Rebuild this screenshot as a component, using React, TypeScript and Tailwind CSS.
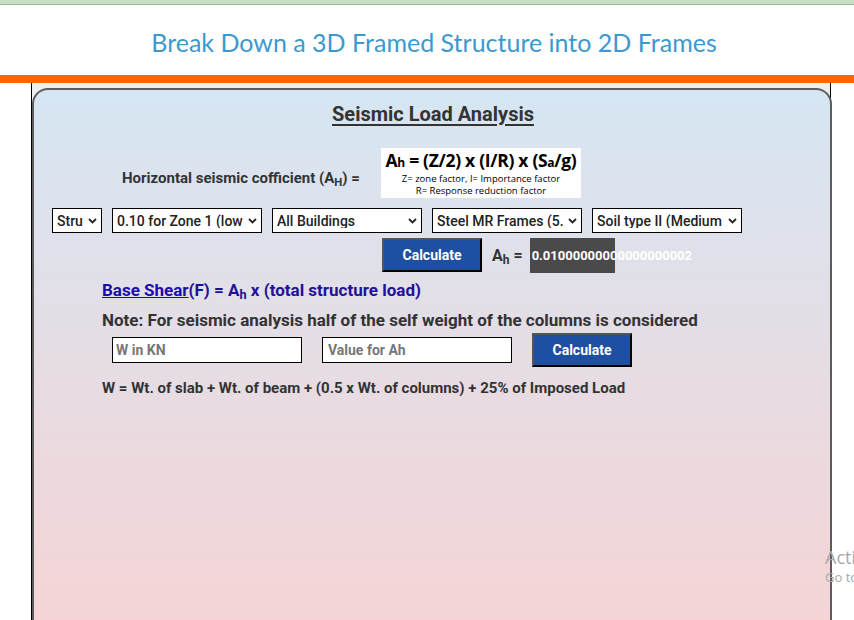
import React from 'react';

const selects = [
  { label: 'Stru', w: 'w-[50px]' },
  { label: '0.10 for Zone 1 (low', w: 'w-[150px]' },
  { label: 'All Buildings', w: 'w-[150px]' },
  { label: 'Steel MR Frames (5.', w: 'w-[150px]' },
  { label: 'Soil type II (Medium', w: 'w-[150px]' },
];

function Chevron() {
  return (
    <svg width="9" height="6" viewBox="0 0 9 6" className="shrink-0">
      <polyline points="1,1 4.5,4.5 8,1" fill="none" stroke="#222" strokeWidth="1.8" />
    </svg>
  );
}

function Select({ label, w }: { label: string; w: string }) {
  return (
    <div className={`${w} h-[25px] border border-black bg-white flex items-center pl-[4px] pr-[4px] gap-[2px]`}>
      <span className="flex-1 overflow-hidden whitespace-nowrap text-[14px] font-medium text-[#222] leading-none">{label}</span>
      <Chevron />
    </div>
  );
}

function CalcButton() {
  return (
    <button className="w-[100px] h-[34px] bg-[#1f4fa0] border-2 border-t-[#555] border-l-[#555] border-r-black border-b-black text-white text-[14px] font-bold">
      Calculate
    </button>
  );
}

export default function App() {
  return (
    <div className="w-[854px] h-[620px] overflow-hidden bg-white relative font-['Roboto',sans-serif]">
      {/* top strip */}
      <div className="h-[5px] bg-[#c6e0c6] border-b border-[#9cb89c]" />

      {/* header */}
      <div className="h-[70px] flex items-center justify-center pl-[14px] pt-[6px]">
        <h1 className="font-['Lato',sans-serif] text-[25px] text-[#3b99d0]">
          Break Down a 3D Framed Structure into 2D Frames
        </h1>
      </div>
      <div className="h-[8px] bg-[#ff6600]" />

      {/* page body */}
      <div className="ml-[31px] w-[800px] h-[537px] border-l border-r border-black bg-[#efefef] pt-[5px]">
        <div className="w-[800px] h-[560px] rounded-t-[16px] border-2 border-b-0 border-[#5c5c5c] bg-gradient-to-b from-[#d5e6f3] to-[#f6d3d4] text-[#333]">
          <h2 className="mt-[12px] text-center text-[20px] leading-[24px] font-bold underline underline-offset-[3px] decoration-[1.5px] pl-[2px]">
            Seismic Load Analysis
          </h2>

          {/* coefficient + formula */}
          <div className="mt-[22px] ml-[88px] flex items-center">
            <div className="w-[259px] mt-[10px] text-[15px] font-bold text-[#333] whitespace-nowrap">
              Horizontal seismic cofficient (A<sub>H</sub>) =
            </div>
            <div className="w-[200px] h-[50px] bg-white flex flex-col items-center font-['Open_Sans',sans-serif] text-black">
              <div className="text-[17.5px] font-bold leading-[20px] mt-[2px] tracking-[-0.3px] whitespace-nowrap">
                A<span className="text-[12px]">h</span> = (Z/2) x (I/R) x (S<span className="text-[12px]">a</span>/g)
              </div>
              <div className="text-[9.5px] leading-[12px] whitespace-nowrap">Z= zone factor, I= Importance factor</div>
              <div className="text-[9.5px] leading-[12px] whitespace-nowrap">R= Response reduction factor</div>
            </div>
          </div>

          {/* selects */}
          <div className="mt-[10px] ml-[18px] flex gap-[10px]">
            {selects.map((s) => (
              <Select key={s.label} label={s.label} w={s.w} />
            ))}
          </div>

          {/* calculate Ah */}
          <div className="mt-[5px] ml-[348px] flex items-start">
            <CalcButton />
            <div className="ml-[10px] mt-[6px] text-[16px] font-bold text-[#333]">
              A<sub>h</sub> =
            </div>
            <div className="ml-[7px] w-[85px] h-[35px] bg-[#4a4a4a] flex items-center">
              <span className="pl-[2px] text-[13px] font-bold text-white whitespace-nowrap">0.01000000000000000002</span>
            </div>
          </div>

          {/* base shear */}
          <div className="mt-[7px] ml-[68px] text-[17px] leading-[20px] font-bold text-[#23109a]">
            <span className="underline text-[#1a0dab]">Base Shear</span>(F) = A<sub>h</sub> x (total structure load)
          </div>
          <div className="mt-[10px] ml-[68px] text-[17px] leading-[20px] font-bold text-[#333]">
            Note: For seismic analysis half of the self weight of the columns is considered
          </div>

          {/* inputs */}
          <div className="mt-[3px] ml-[78px] flex items-center gap-[20px]">
            <input
              placeholder="W in KN"
              className="w-[190px] h-[26px] border border-black bg-white px-[3px] text-[14px] font-bold placeholder:text-[#777] outline-none"
            />
            <input
              placeholder="Value for Ah"
              className="w-[190px] h-[26px] border border-black bg-white px-[5px] text-[14px] font-bold placeholder:text-[#777] outline-none"
            />
            <CalcButton />
          </div>

          <div className="mt-[12px] ml-[68px] text-[15px] leading-[18px] font-bold text-[#333]">
            W = Wt. of slab + Wt. of beam + (0.5 x Wt. of columns) + 25% of Imposed Load
          </div>
        </div>
      </div>

      {/* activation watermark */}
      <div className="absolute left-[825px] top-[546px] font-['Open_Sans',sans-serif] text-[#a8a8a8] whitespace-nowrap">
        <div className="text-[18px] leading-[22px]">Activate Windows</div>
        <div className="text-[13px] leading-[18px]">Go to Settings to activate Windows.</div>
      </div>
    </div>
  );
}
